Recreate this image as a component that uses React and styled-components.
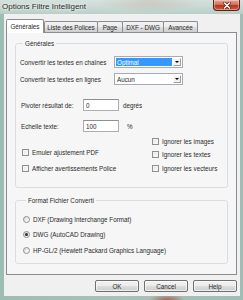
import React from "react";
import styled, { createGlobalStyle } from "styled-components";

const GlobalStyle = createGlobalStyle`
  html, body { margin: 0; padding: 0; width: 243px; height: 300px; overflow: hidden; background: #a3bfb7; }
  *, *::before, *::after { box-sizing: border-box; }
`;

const Window = styled.div`
  width: 243px;
  height: 300px;
  display: flex;
  flex-direction: column;
  font-family: "Liberation Sans", Arial, sans-serif;
  font-size: 6.3px;
  color: #2a2a2a;
  background:
    radial-gradient(ellipse 18px 6px at 167px 300px, rgba(160, 70, 60, 0.75), rgba(160, 70, 60, 0)),
    radial-gradient(ellipse 55px 12px at 150px 0px, rgba(140, 90, 70, 0.45), rgba(140, 90, 70, 0)),
    linear-gradient(90deg, #9fbcb3 0, #a8c2ba 50%, #a0bdb5 100%);
`;

const TitleBar = styled.div`
  height: 14px;
  flex: none;
  display: flex;
  align-items: flex-start;
  justify-content: space-between;
  padding: 0 3px 0 2px;
  background: linear-gradient(180deg, rgba(255, 255, 255, 0.55), rgba(255, 255, 255, 0.25));
`;

const Title = styled.span`
  font-size: 8px;
  line-height: 8px;
  margin-top: 3px;
  color: #2a2a2a;
  text-shadow: 0 0 3px #fff, 0 0 5px rgba(255, 255, 255, 0.9);
  white-space: nowrap;
`;

const CloseButton = styled.div`
  width: 27px;
  height: 11px;
  display: flex;
  align-items: center;
  justify-content: center;
  border: 1px solid #5b2219;
  border-top: none;
  border-radius: 0 0 4px 4px;
  background: linear-gradient(180deg, #e3a595 0%, #d0705a 45%, #b8351e 55%, #cf5c3f 100%);
  box-shadow: inset 0 0 0 1px rgba(255, 255, 255, 0.35);
`;

const Client = styled.div`
  flex: 1;
  margin: 0 3px 4px 4px;
  padding: 5px 3px 4px 2px;
  background: #f0f0f0;
  display: flex;
  flex-direction: column;
`;

const TabRow = styled.div`
  display: flex;
  align-items: flex-end;
  height: 13px;
  position: relative;
  z-index: 1;
`;

const Tab = styled.div`
  width: ${(p) => p.$w}px;
  height: ${(p) => (p.$active ? 14 : 11)}px;
  margin-left: ${(p) => p.$ml || 0}px;
  margin-bottom: ${(p) => (p.$active ? -1 : 0)}px;
  border: 1px solid #898c95;
  border-bottom: none;
  border-radius: 2px 2px 0 0;
  background: ${(p) =>
    p.$active ? "#ffffff" : "linear-gradient(180deg, #f2f2f2 0%, #ebebeb 50%, #dddddd 51%, #cfcfcf 100%)"};
  display: flex;
  align-items: center;
  justify-content: center;
  padding-bottom: ${(p) => (p.$active ? 1 : 0)}px;
  white-space: nowrap;
`;

const Panel = styled.div`
  height: 243px;
  flex: none;
  border: 1px solid #898c95;
  background: #f6f6f6;
  padding: 7px 8px 0 8px;
  display: flex;
  flex-direction: column;
`;

const Group = styled.fieldset`
  margin: ${(p) => p.$mt || 0}px 0 0 0;
  padding: ${(p) => p.$pad};
  border: 1px solid #d5dfe5;
  border-radius: 3px;
  min-width: 0;
  display: flex;
  flex-direction: column;
`;

const Legend = styled.legend`
  margin-left: 3px;
  padding: 0 2px;
  line-height: 7px;
  font-size: 6.3px;
`;

const FieldRow = styled.div`
  display: grid;
  grid-template-columns: ${(p) => p.$label}px auto auto;
  justify-content: start;
  align-items: center;
  height: 12px;
  margin-top: ${(p) => p.$mt || 0}px;
  margin-left: ${(p) => p.$ml || 0}px;
`;

const Label = styled.span`
  white-space: nowrap;
`;

const Combo = styled.div`
  width: 69px;
  height: 12px;
  border: 1px solid #a5acb5;
  background: #fff;
  display: flex;
  padding: 1px;
`;

const ComboValue = styled.div`
  flex: 1;
  display: flex;
  align-items: center;
  padding-left: 1px;
  margin-right: 1px;
  background: ${(p) => (p.$selected ? "#3399ff" : "transparent")};
  color: ${(p) => (p.$selected ? "#fff" : "#2a2a2a")};
`;

const ComboButton = styled.div`
  width: 8px;
  background: #f0f0f0;
  border: 1px solid;
  border-color: #fff #a0a0a0 #a0a0a0 #fff;
  display: flex;
  align-items: center;
  justify-content: center;
  &::after {
    content: "";
    border-left: 2px solid transparent;
    border-right: 2px solid transparent;
    border-top: 2px solid #000;
  }
`;

const TextInput = styled.div`
  width: 36px;
  height: 12px;
  border: 1px solid #abadb3;
  border-top-color: #8e8f8f;
  background: #fff;
  display: flex;
  align-items: center;
  padding-left: 2px;
`;

const Suffix = styled.span`
  margin-left: ${(p) => p.$ml}px;
`;

const CheckGrid = styled.div`
  display: grid;
  grid-template-columns: 130px auto;
  margin: 5px 0 0 2px;
`;

const CheckColumn = styled.div`
  display: flex;
  flex-direction: column;
  justify-content: flex-end;
  gap: ${(p) => p.$gap}px;
`;

const CheckItem = styled.div`
  display: flex;
  align-items: center;
  height: 8px;
  gap: 3px;
  white-space: nowrap;
`;

const Box = styled.span`
  width: 7px;
  height: 7px;
  flex: none;
  border: 1px solid #8f8f8f;
  background: linear-gradient(135deg, #dcdcdc 0%, #f4f4f4 60%, #ffffff 100%);
  box-shadow: inset 0 0 0 1px #f4f4f4;
`;

const RadioList = styled.div`
  display: flex;
  flex-direction: column;
  gap: 7.5px;
`;

const Circle = styled.span`
  width: 7px;
  height: 7px;
  flex: none;
  border-radius: 50%;
  border: 1px solid #8f8f8f;
  background: linear-gradient(135deg, #d8d8d8 0%, #f6f6f6 70%, #ffffff 100%);
  display: flex;
  align-items: center;
  justify-content: center;
  &::after {
    content: "";
    display: ${(p) => (p.$checked ? "block" : "none")};
    width: 3px;
    height: 3px;
    border-radius: 50%;
    background: #1c2a3a;
  }
`;

const ButtonRow = styled.div`
  display: flex;
  justify-content: flex-end;
  gap: 5px;
  margin-top: 5px;
  height: 12px;
`;

const Button = styled.div`
  width: 44px;
  height: 12px;
  border: 1px solid #707070;
  border-radius: 2px;
  background: linear-gradient(180deg, #f2f2f2 0%, #ebebeb 50%, #dddddd 51%, #cfcfcf 100%);
  box-shadow: inset 0 0 0 1px rgba(255, 255, 255, 0.6);
  display: flex;
  align-items: center;
  justify-content: center;
`;

const tabs = [
  { label: "Générales", w: 38, active: true },
  { label: "Liste des Polices", w: 54 },
  { label: "Page", w: 26, ml: -1 },
  { label: "DXF - DWG", w: 42, ml: -1 },
  { label: "Avancée", w: 35, ml: -1 },
];

const Check = ({ children }) => (
  <CheckItem>
    <Box />
    <span>{children}</span>
  </CheckItem>
);

const Radio = ({ checked, children }) => (
  <CheckItem>
    <Circle $checked={checked} />
    <span>{children}</span>
  </CheckItem>
);

export default function App() {
  return (
    <>
      <GlobalStyle />
      <Window>
        <TitleBar>
          <Title>Options Filtre Intelligent</Title>
          <CloseButton>
            <svg width="8" height="7" viewBox="0 0 8 7">
              <path d="M1.5 1 L6.5 6 M6.5 1 L1.5 6" stroke="#5a1a10" strokeWidth="2.6" strokeLinecap="round" />
              <path d="M1.5 1 L6.5 6 M6.5 1 L1.5 6" stroke="#ffffff" strokeWidth="1.5" strokeLinecap="round" />
            </svg>
          </CloseButton>
        </TitleBar>
        <Client>
          <TabRow>
            {tabs.map((t) => (
              <Tab key={t.label} $w={t.w} $ml={t.ml} $active={t.active}>
                {t.label}
              </Tab>
            ))}
          </TabRow>
          <Panel>
            <Group $pad="9px 6px 15px 4px">
              <Legend>Générales</Legend>
              <FieldRow $label={94}>
                <Label>Convertir les textes en chaînes</Label>
                <Combo>
                  <ComboValue $selected>Optimal</ComboValue>
                  <ComboButton />
                </Combo>
              </FieldRow>
              <FieldRow $label={94} $mt={5}>
                <Label>Convertir les textes en lignes</Label>
                <Combo>
                  <ComboValue>Aucun</ComboValue>
                  <ComboButton />
                </Combo>
              </FieldRow>
              <FieldRow $label={62} $mt={14} $ml={1}>
                <Label>Pivoter résultat de:</Label>
                <TextInput>0</TextInput>
                <Suffix $ml={4}>degrés</Suffix>
              </FieldRow>
              <FieldRow $label={62} $mt={9} $ml={1}>
                <Label>Echelle texte:</Label>
                <TextInput>100</TextInput>
                <Suffix $ml={8}>%</Suffix>
              </FieldRow>
              <CheckGrid>
                <CheckColumn $gap={8}>
                  <Check>Emuler ajustement PDF</Check>
                  <Check>Afficher avertissements Police</Check>
                </CheckColumn>
                <CheckColumn $gap={5.5}>
                  <Check>Ignorer les images</Check>
                  <Check>Ignorer les textes</Check>
                  <Check>Ignorer les vecteurs</Check>
                </CheckColumn>
              </CheckGrid>
            </Group>
            <Group $mt={9} $pad="11px 6px 9px 7px">
              <Legend>Format Fichier Converti</Legend>
              <RadioList>
                <Radio>DXF (Drawing Interchange Format)</Radio>
                <Radio checked>DWG (AutoCAD Drawing)</Radio>
                <Radio>HP-GL/2 (Hewlett Packard Graphics Language)</Radio>
              </RadioList>
            </Group>
          </Panel>
          <ButtonRow>
            <Button>OK</Button>
            <Button>Cancel</Button>
            <Button>Help</Button>
          </ButtonRow>
        </Client>
      </Window>
    </>
  );
}
